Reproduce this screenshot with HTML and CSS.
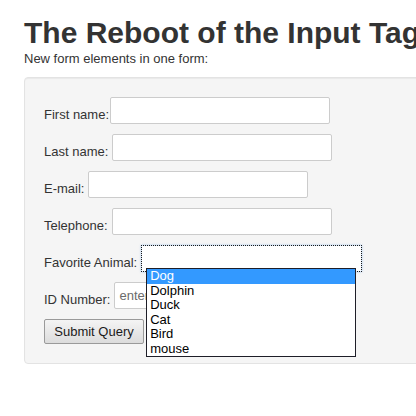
FILE: index.html
```html
<!DOCTYPE html>
<html lang="en">
<head>
<meta charset="utf-8">
<title>The Reboot of the Input Tag</title>
<link rel="stylesheet" href="styles.css">
</head>
<body>
<h1 class="title">The Reboot of the Input Tag</h1>
<p class="subtitle">New form elements in one form:</p>
<form class="well">
  <div class="row row-tight">
    <label class="label">First name:</label>
    <input class="field" type="text">
  </div>
  <div class="row">
    <label class="label">Last name:</label>
    <input class="field" type="text">
  </div>
  <div class="row">
    <label class="label">E-mail:</label>
    <input class="field" type="email">
  </div>
  <div class="row">
    <label class="label">Telephone:</label>
    <input class="field" type="tel">
  </div>
  <div class="row">
    <label class="label">Favorite Animal:</label>
    <div class="combo">
      <input class="field field-focused" type="text" list="animals">
      <ul class="dropdown">
        <li class="option option-active">Dog</li>
        <li class="option">Dolphin</li>
        <li class="option">Duck</li>
        <li class="option">Cat</li>
        <li class="option">Bird</li>
        <li class="option">mouse</li>
      </ul>
    </div>
  </div>
  <div class="row">
    <label class="label">ID Number:</label>
    <input class="field" type="text" placeholder="enter your ID number">
  </div>
  <div class="row">
    <button class="submit" type="button">Submit Query</button>
  </div>
</form>
</body>
</html>
```

FILE: styles.css
```css
html, body {
  overflow: hidden;
}
body {
  margin: 0;
  padding: 15px 0 0 24px;
  background: #ffffff;
  color: #333333;
  font-family: "Liberation Sans", Arial, sans-serif;
  font-size: 13px;
  line-height: 15px;
  width: 560px;
}
.title {
  margin: 0;
  font-size: 30px;
  line-height: 35px;
  font-weight: bold;
  white-space: nowrap;
  color: #333333;
}
.subtitle {
  margin: 1px 0 0 0;
  font-size: 13px;
  line-height: 15px;
}
.well {
  margin: 11px 0 0 0;
  padding: 19px;
  background: #f5f5f5;
  border: 1px solid #e3e3e3;
  border-radius: 4px;
  box-shadow: inset 0 1px 1px rgba(0, 0, 0, 0.05);
  display: flex;
  flex-direction: column;
  gap: 10px;
}
.row {
  display: flex;
  align-items: flex-end;
  gap: 4px;
}
.row-tight {
  gap: 1px;
}
.label {
  margin-bottom: 2px;
  color: #333333;
  white-space: nowrap;
}
.field {
  box-sizing: border-box;
  width: 220px;
  height: 27px;
  margin: 0;
  padding: 0 4px;
  border: 1px solid #cccccc;
  border-radius: 2px;
  background: #ffffff;
  font-family: "Liberation Sans", Arial, sans-serif;
  font-size: 13px;
  color: #333333;
}
.field::placeholder {
  color: #6b6b6b;
}
.combo {
  position: relative;
  display: flex;
}
.field-focused {
  width: 221px;
  border-color: #d6e6f7;
  border-radius: 0;
  outline: 1px dotted #1a1a1a;
  outline-offset: -1px;
  box-shadow: 0 0 2px rgba(120, 170, 230, 0.6);
}
.dropdown {
  position: absolute;
  left: 5px;
  top: 23px;
  z-index: 2;
  box-sizing: border-box;
  width: 210px;
  margin: 0;
  padding: 0;
  list-style: none;
  background: #ffffff;
  border: 1px solid #1e1e28;
}
.option {
  padding-left: 3px;
  height: 14.5px;
  line-height: 14.5px;
  font-size: 13px;
  color: #000000;
}
.option-active {
  background: #3399ff;
  color: #ffffff;
}
.submit {
  box-sizing: border-box;
  width: 100px;
  height: 25px;
  margin: 0;
  padding: 0;
  border: 1px solid #9a9a9a;
  border-radius: 2px;
  background: linear-gradient(#f4f4f4, #dcdcdc);
  font-family: "Liberation Sans", Arial, sans-serif;
  font-size: 13px;
  color: #1a1a1a;
}
```
